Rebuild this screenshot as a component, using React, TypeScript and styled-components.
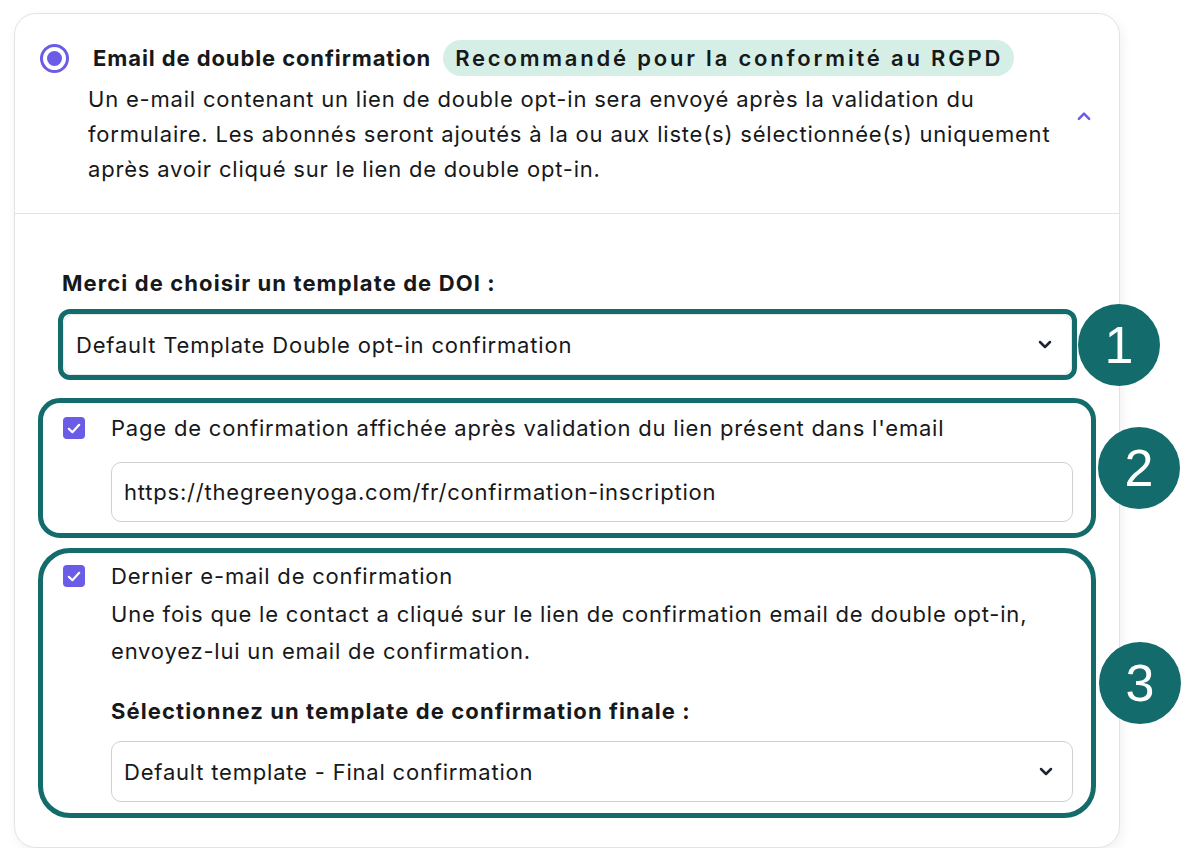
import React from 'react';
import styled, {createGlobalStyle} from 'styled-components';

const TEAL = '#136c6b';
const PURPLE = '#6b5ce7';
const INK = '#17181a';

const GlobalStyle = createGlobalStyle`
    body {
        margin: 0;
        background: #ffffff;
        font-family: Inter, "Noto Sans", "Liberation Sans", sans-serif;
        font-size: 22px;
        letter-spacing: 0.8px;
        color: ${INK};
        -webkit-font-smoothing: antialiased;
    }
`;

const Page = styled.div`
    padding: 13px 0 0 14px;
`;

const Card = styled.div`
    width: 1106px;
    height: 835px;
    box-sizing: border-box;
    border: 1.5px solid #e3e3e3;
    border-radius: 22px;
    background: #fff;
    box-shadow: 2px 4px 12px rgba(0, 0, 0, 0.06);
`;

const Header = styled.div`
    display: flex;
    padding: 26px 28px 26px 25px;
    border-bottom: 1.5px solid #e3e3e3;
`;

const Radio = styled.span`
    flex: none;
    width: 29px;
    height: 29px;
    box-sizing: border-box;
    border: 3px solid ${PURPLE};
    border-radius: 50%;
    display: flex;
    align-items: center;
    justify-content: center;
    margin: 4px 19px 0 0;
    &::after {
        content: '';
        width: 15px;
        height: 15px;
        border-radius: 50%;
        background: ${PURPLE};
    }
`;

const HeaderText = styled.div`
    flex: 1;
    display: flex;
    flex-direction: column;
    gap: 6px;
`;

const TitleRow = styled.div`
    display: flex;
    align-items: center;
    gap: 12px;
    height: 36px;
`;

const Title = styled.span`
    font-weight: 700;
    letter-spacing: 0.9px;
    margin-left: 5px;
`;

const Badge = styled.span`
    height: 36px;
    display: flex;
    align-items: center;
    padding: 0 11px 0 12px;
    border-radius: 18px;
    background: #d6efe6;
    font-weight: 600;
    letter-spacing: 2.8px;
`;

const Description = styled.p<{lh?: number}>`
    margin: 0;
    line-height: ${({lh}) => lh ?? 35}px;
`;

const Toggle = styled.div`
    flex: none;
    width: 14px;
    display: flex;
    align-items: center;
    justify-content: center;
    padding-top: 4px;
`;

const Body = styled.div`
    padding: 54px 23px 0 23px;
    display: flex;
    flex-direction: column;
`;

const TemplateSection = styled.div`
    padding: 0 19px 0 20px;
    display: flex;
    flex-direction: column;
    gap: 11px;
`;

const Label = styled.div<{indent?: number}>`
    font-weight: 700;
    line-height: 30px;
    letter-spacing: 1.1px;
    padding-left: ${({indent}) => indent ?? 0}px;
`;

const Highlight = styled.div<{radius: number}>`
    position: relative;
    border: 5px solid ${TEAL};
    border-radius: ${({radius}) => radius}px;
    background: #fff;
`;

const Marker = styled.span<{gap: number}>`
    position: absolute;
    top: 50%;
    left: calc(100% + ${({gap}) => gap}px);
    transform: translateY(-50%);
    width: 82px;
    height: 82px;
    border-radius: 50%;
    background: ${TEAL};
    color: #fff;
    display: flex;
    align-items: center;
    justify-content: center;
    font-family: "Liberation Sans", Arial, sans-serif;
    font-size: 52px;
    letter-spacing: 0;
    line-height: 1;
`;

const Select = styled.div<{bordered?: boolean}>`
    height: 61px;
    box-sizing: border-box;
    display: flex;
    align-items: center;
    justify-content: space-between;
    padding: 0 19px 0 12px;
    border: ${({bordered}) => (bordered ? '1.5px solid #d0d0d0' : '1px solid #e6e6e6')};
    border-radius: 10px;
    background: #fff;
`;

const Field = styled.input`
    width: 100%;
    height: 60px;
    box-sizing: border-box;
    padding: 0 12px;
    border: 1.5px solid #d0d0d0;
    border-radius: 10px;
    font-family: inherit;
    font-size: 22px;
    letter-spacing: 0.8px;
    color: ${INK};
    background: #fff;
    outline: none;
`;

const Option = styled.div<{padding: string}>`
    display: grid;
    grid-template-columns: 22px 1fr;
    column-gap: 26px;
    padding: ${({padding}) => padding};
`;

const Check = styled.span`
    width: 22px;
    height: 22px;
    margin-top: 4px;
    border-radius: 4px;
    background: ${PURPLE};
    display: flex;
    align-items: center;
    justify-content: center;
`;

const OptionBody = styled.div`
    display: flex;
    flex-direction: column;
`;

const OptionTitle = styled.div`
    line-height: 30px;
`;

const Stack = styled.div<{gap: number}>`
    display: flex;
    flex-direction: column;
    gap: ${({gap}) => gap}px;
`;

const ChevronDown = () => (
    <svg width="14" height="9" viewBox="0 0 14 9" fill="none">
        <path d="M2 2l5 5 5-5" stroke="#1e2433" strokeWidth="2.5" strokeLinecap="round" strokeLinejoin="round"/>
    </svg>
);

const ChevronUp = () => (
    <svg width="15" height="10" viewBox="0 0 15 10" fill="none">
        <path d="M2 8l5.5-5.5L13 8" stroke={PURPLE} strokeWidth="2.7" strokeLinecap="round" strokeLinejoin="round"/>
    </svg>
);

const Tick = () => (
    <svg width="14" height="11" viewBox="0 0 14 11" fill="none">
        <path d="M1.8 5.8l3.6 3.4L12.2 1.8" stroke="#fff" strokeWidth="2.2" strokeLinecap="round" strokeLinejoin="round"/>
    </svg>
);

export default function App() {
    return (
        <Page>
            <GlobalStyle/>
            <Card>
                <Header>
                    <Radio/>
                    <HeaderText>
                        <TitleRow>
                            <Title>Email de double confirmation</Title>
                            <Badge>Recommandé pour la conformité au RGPD</Badge>
                        </TitleRow>
                        <Description>
                            Un e-mail contenant un lien de double opt-in sera envoyé après la validation du
                            formulaire. Les abonnés seront ajoutés à la ou aux liste(s) sélectionnée(s) uniquement
                            après avoir cliqué sur le lien de double opt-in.
                        </Description>
                    </HeaderText>
                    <Toggle><ChevronUp/></Toggle>
                </Header>
                <Body>
                    <TemplateSection>
                        <Label indent={4}>Merci de choisir un template de DOI :</Label>
                        <Highlight radius={12}>
                            <Select>
                                Default Template Double opt-in confirmation
                                <ChevronDown/>
                            </Select>
                            <Marker gap={6}>1</Marker>
                        </Highlight>
                    </TemplateSection>
                    <Stack gap={10} style={{marginTop: 18}}>
                        <Highlight radius={22}>
                            <Option padding="10px 18px 11px 20px">
                                <Check><Tick/></Check>
                                <Stack gap={19}>
                                    <OptionTitle>Page de confirmation affichée après validation du lien présent dans l'email</OptionTitle>
                                    <Field readOnly value="https://thegreenyoga.com/fr/confirmation-inscription"/>
                                </Stack>
                            </Option>
                            <Marker gap={7}>2</Marker>
                        </Highlight>
                        <Highlight radius={32}>
                            <Option padding="8px 18px 11px 20px">
                                <Check><Tick/></Check>
                                <OptionBody>
                                    <OptionTitle>Dernier e-mail de confirmation</OptionTitle>
                                    <Description lh={37} style={{marginTop: 5}}>
                                        Une fois que le contact a cliqué sur le lien de confirmation email de double opt-in,
                                        envoyez-lui un email de confirmation.
                                    </Description>
                                    <Label style={{marginTop: 26}}>Sélectionnez un template de confirmation finale :</Label>
                                    <Select bordered style={{marginTop: 15}}>
                                        Default template - Final confirmation
                                        <ChevronDown/>
                                    </Select>
                                </OptionBody>
                            </Option>
                            <Marker gap={8}>3</Marker>
                        </Highlight>
                    </Stack>
                </Body>
            </Card>
        </Page>
    );
}
